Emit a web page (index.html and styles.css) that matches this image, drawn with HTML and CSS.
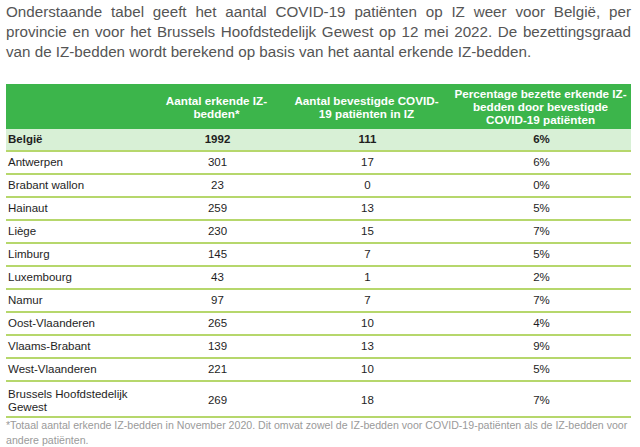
FILE: index.html
```html
<!DOCTYPE html>
<html lang="nl">
<head>
<meta charset="utf-8">
<link rel="stylesheet" href="styles.css">
</head>
<body>
<div class="page">
  <p class="intro">Onderstaande tabel geeft het aantal COVID-19 patiënten op IZ weer voor België, per provincie en voor het Brussels Hoofdstedelijk Gewest op 12 mei 2022. De bezettingsgraad van de IZ-bedden wordt berekend op basis van het aantal erkende IZ-bedden.</p>
  <table class="tbl">
    <colgroup>
      <col class="c1"><col class="c2"><col class="c3"><col class="c4">
    </colgroup>
    <thead>
      <tr>
        <th></th>
        <th>Aantal erkende IZ-<br>bedden*</th>
        <th>Aantal bevestigde COVID-<br>19 patiënten in IZ</th>
        <th>Percentage bezette erkende IZ-<br>bedden door bevestigde<br>COVID-19 patiënten</th>
      </tr>
    </thead>
    <tbody>
      <tr class="total"><td>België</td><td>1992</td><td>111</td><td>6%</td></tr>
      <tr><td>Antwerpen</td><td>301</td><td>17</td><td>6%</td></tr>
      <tr><td>Brabant wallon</td><td>23</td><td>0</td><td>0%</td></tr>
      <tr><td>Hainaut</td><td>259</td><td>13</td><td>5%</td></tr>
      <tr><td>Liège</td><td>230</td><td>15</td><td>7%</td></tr>
      <tr><td>Limburg</td><td>145</td><td>7</td><td>5%</td></tr>
      <tr><td>Luxembourg</td><td>43</td><td>1</td><td>2%</td></tr>
      <tr><td>Namur</td><td>97</td><td>7</td><td>7%</td></tr>
      <tr><td>Oost-Vlaanderen</td><td>265</td><td>10</td><td>4%</td></tr>
      <tr><td>Vlaams-Brabant</td><td>139</td><td>13</td><td>9%</td></tr>
      <tr><td>West-Vlaanderen</td><td>221</td><td>10</td><td>5%</td></tr>
      <tr class="tall"><td>Brussels Hoofdstedelijk<br>Gewest</td><td>269</td><td>18</td><td>7%</td></tr>
    </tbody>
  </table>
  <p class="note">*Totaal aantal erkende IZ-bedden in November 2020. Dit omvat zowel de IZ-bedden voor COVID-19-patiënten als de IZ-bedden voor<br>andere patiënten.</p>
</div>
</body>
</html>
```

FILE: styles.css
```css
html, body {
  margin: 0;
  padding: 0;
  background: #ffffff;
}
.page {
  padding: 2px 9px 0 6px;
  font-family: "Liberation Sans", Arial, sans-serif;
}
.intro {
  margin: 0;
  font-size: 15.2px;
  line-height: 20px;
  color: #555555;
  text-align: justify;
}
.tbl {
  margin-top: 22px;
  width: 625px;
  border-collapse: collapse;
  table-layout: fixed;
  font-size: 11.5px;
  color: #1e1e1e;
}
.c1 { width: 144px; }
.c2 { width: 133px; }
.c3 { width: 167px; }
.c4 { width: 181px; }
.tbl th {
  background: #3cb54b;
  color: #ffffff;
  font-size: 11.7px;
  font-weight: bold;
  height: 45px;
  padding: 0 2px;
  line-height: 13px;
  text-align: center;
  vertical-align: middle;
  white-space: nowrap;
}
.tbl td {
  height: 21px;
  padding: 0 0 0 2px;
  border-bottom: 2px solid #b6d76c;
  text-align: center;
  vertical-align: middle;
  line-height: 13px;
}
.tbl td:first-child {
  text-align: left;
}
.total td {
  background: #d8f0d6;
  font-weight: bold;
}
.tall td {
  height: 31px;
  padding-top: 3px;
}
.note {
  margin: 0;
  font-size: 10.6px;
  line-height: 15px;
  color: #9a9a9a;
  white-space: nowrap;
}
```
